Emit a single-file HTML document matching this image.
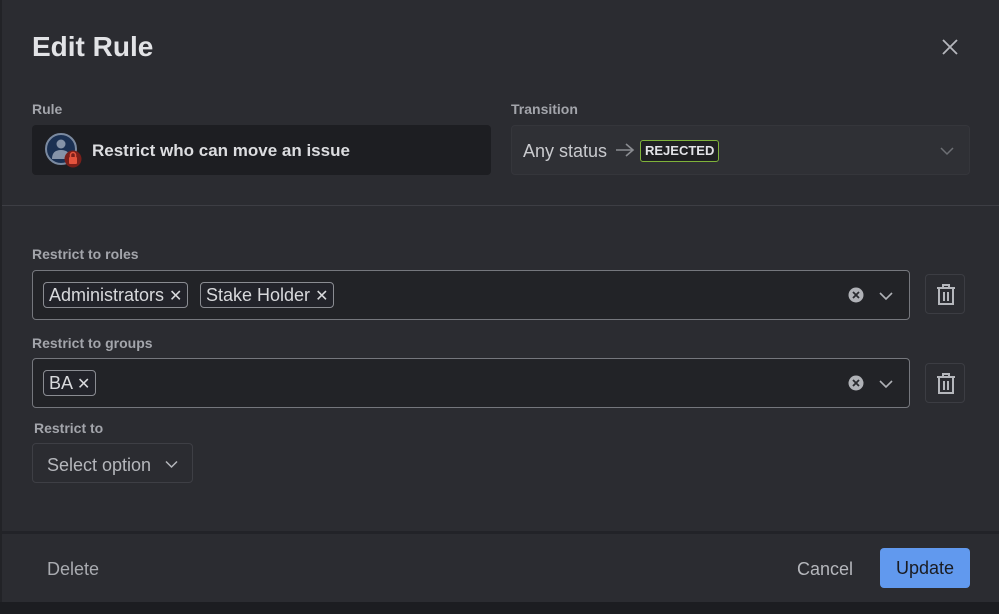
<!DOCTYPE html>
<html><head><meta charset="utf-8"><style>
*{box-sizing:border-box;margin:0;padding:0}
body{width:999px;height:614px;background:#1c1d21;font-family:"Liberation Sans",sans-serif;position:relative;overflow:hidden;color:#d8d9dc}
.modal{position:absolute;left:2px;top:0;width:997px;height:602px;background:#2b2c31;}
.abs{position:absolute}
.lbl{font-size:14px;font-weight:bold;color:#a3a5ab}
.tag{position:absolute;top:11px;height:26px;border:1px solid #8a8c92;border-radius:4px;font-size:18px;color:#d8d9dc;padding:2px 5px 0 5px;background:#22232a;white-space:nowrap}
.sel{position:absolute;left:30px;width:878px;height:50px;border:1px solid #75777d;border-radius:4px;background:#222327}
.trash{position:absolute;left:923px;width:40px;height:40px;border:1px solid #3c3d43;border-radius:4px}
</style></head><body>
<div class="modal">
<div class="abs" style="left:30px;top:31px;font-size:28px;font-weight:bold;color:#e2e3e6">Edit Rule</div>
<svg class="abs" style="left:939px;top:38px" width="18" height="18"><path d="M2 2L16 16M16 2L2 16" stroke="#b5b7bc" stroke-width="1.8"/></svg>

<div class="abs lbl" style="left:30px;top:101px">Rule</div>
<div class="abs" style="left:30px;top:125px;width:459px;height:50px;background:#1d1e22;border-radius:4px">
 <svg class="abs" style="left:13px;top:8px" width="38" height="36">
  <circle cx="16" cy="16" r="15" fill="#1b3153" stroke="#7b8aa0" stroke-width="2"/>
  <circle cx="16" cy="11" r="4.5" fill="#8593a8"/>
  <path d="M7 26 Q7 17 16 17 Q25 17 25 26 Z" fill="#8593a8"/>
  <circle cx="28" cy="26" r="8.5" fill="#7a1f1a"/>
  <rect x="24" y="24" width="8" height="7" rx="1" fill="#e5533d"/>
  <path d="M25.5 24V22a2.5 2.5 0 0 1 5 0V24" stroke="#e5533d" stroke-width="1.5" fill="none"/>
 </svg>
 <div class="abs" style="left:60px;top:16px;font-size:17px;font-weight:bold;color:#dcdde0">Restrict who can move an issue</div>
</div>

<div class="abs lbl" style="left:509px;top:101px">Transition</div>
<div class="abs" style="left:509px;top:125px;width:459px;height:50px;background:#2f3035;border:1px solid #35363b;border-radius:4px">
 <div class="abs" style="left:11px;top:15px;font-size:18px;color:#c9cace">Any status</div>
 <svg class="abs" style="left:103px;top:16px" width="20" height="16"><path d="M1 8H18M11 2L18 8L11 14" stroke="#8a8c91" stroke-width="1.6" fill="none"/></svg>
 <div class="abs" style="left:128px;top:14px;height:22px;padding:2px 4px 0;border:1.5px solid #7fb33a;border-radius:3px;font-size:13px;font-weight:bold;color:#e2e3e6;background:#1f2022">REJECTED</div>
 <svg class="abs" style="left:428px;top:20px" width="14" height="10"><path d="M1 2L7 8L13 2" stroke="#6d6f74" stroke-width="1.5" fill="none"/></svg>
</div>

<div class="abs" style="left:0;top:205px;width:997px;height:1px;background:#3d3e44"></div>

<div class="abs lbl" style="left:30px;top:246px">Restrict to roles</div>
<div class="sel" style="top:270px">
 <div class="tag" style="left:10px">Administrators <span style="font-size:16px">✕</span></div>
 <div class="tag" style="left:167px">Stake Holder <span style="font-size:16px">✕</span></div>
 <svg class="abs" style="left:815px;top:16px" width="16" height="16"><circle cx="8" cy="8" r="7.5" fill="#b0b2b7"/><path d="M5 5L11 11M11 5L5 11" stroke="#2a2b30" stroke-width="1.8"/></svg>
 <svg class="abs" style="left:846px;top:20px" width="14" height="10"><path d="M1 2L7 8L13 2" stroke="#b0b2b7" stroke-width="1.6" fill="none"/></svg>
</div>
<div class="trash" style="top:274px"><svg class="abs" style="left:10px;top:9px" width="20" height="22"><path d="M1 4H19M7 4V1H13V4" stroke="#b5b7bc" stroke-width="2" fill="none"/><path d="M3 5V20H17V5" stroke="#b5b7bc" stroke-width="2" fill="none"/><path d="M8 8V17M12 8V17" stroke="#b5b7bc" stroke-width="2"/></svg></div>

<div class="abs lbl" style="left:30px;top:335px">Restrict to groups</div>
<div class="sel" style="top:358px">
 <div class="tag" style="left:10px">BA <span style="font-size:16px">✕</span></div>
 <svg class="abs" style="left:815px;top:16px" width="16" height="16"><circle cx="8" cy="8" r="7.5" fill="#b0b2b7"/><path d="M5 5L11 11M11 5L5 11" stroke="#2a2b30" stroke-width="1.8"/></svg>
 <svg class="abs" style="left:846px;top:20px" width="14" height="10"><path d="M1 2L7 8L13 2" stroke="#b0b2b7" stroke-width="1.6" fill="none"/></svg>
</div>
<div class="trash" style="top:363px"><svg class="abs" style="left:10px;top:9px" width="20" height="22"><path d="M1 4H19M7 4V1H13V4" stroke="#b5b7bc" stroke-width="2" fill="none"/><path d="M3 5V20H17V5" stroke="#b5b7bc" stroke-width="2" fill="none"/><path d="M8 8V17M12 8V17" stroke="#b5b7bc" stroke-width="2"/></svg></div>

<div class="abs lbl" style="left:32px;top:420px">Restrict to</div>
<div class="abs" style="left:30px;top:443px;width:161px;height:40px;border:1px solid #3e3f45;border-radius:4px">
 <div class="abs" style="left:14px;top:11px;font-size:18px;color:#b5b7bc">Select option</div>
 <svg class="abs" style="left:132px;top:16px" width="13" height="9"><path d="M1 1.5L6.5 7L12 1.5" stroke="#b5b7bc" stroke-width="1.5" fill="none"/></svg>
</div>

<div class="abs" style="left:0;top:531px;width:997px;height:3px;background:#222328"></div>
<div class="abs" style="left:45px;top:559px;font-size:18px;color:#a9abb0">Delete</div>
<div class="abs" style="left:795px;top:559px;font-size:18px;color:#b5b7bc">Cancel</div>
<div class="abs" style="left:878px;top:548px;width:90px;height:40px;background:#6199ee;border-radius:4px;font-size:18px;color:#1a1c22;text-align:center;line-height:41px">Update</div>
</div>
<div class="abs" style="left:0;top:0;width:2px;height:602px;background:#222327"></div>
</body></html>
